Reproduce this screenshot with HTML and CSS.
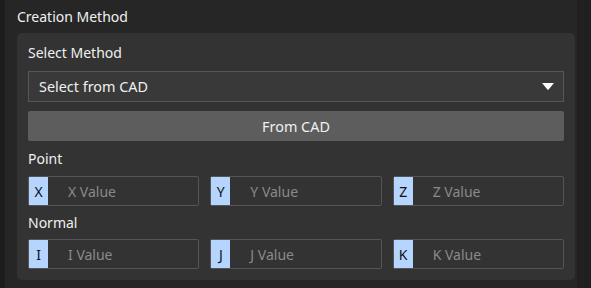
FILE: index.html
```html
<!DOCTYPE html>
<html>
<head>
<meta charset="utf-8">
<link rel="stylesheet" href="styles.css">
</head>
<body>
<div class="frame">
  <div class="edge-left"></div>
  <main class="main">
    <div class="title">Creation Method</div>
    <section class="card">
      <div class="label label-first">Select Method</div>
      <div class="select">
        <span class="select-text">Select from CAD</span>
        <svg class="caret" width="12" height="7" viewBox="0 0 12 7"><path d="M0 0 H12 L6.6 6.4 Q6 7 5.4 6.4 Z" fill="#ffffff"/></svg>
      </div>
      <div class="button">From CAD</div>
      <div class="label label-gap">Point</div>
      <div class="row">
        <div class="field"><span class="tag">X</span><span class="ph">X Value</span></div>
        <div class="field"><span class="tag">Y</span><span class="ph">Y Value</span></div>
        <div class="field"><span class="tag">Z</span><span class="ph">Z Value</span></div>
      </div>
      <div class="label label-gap2">Normal</div>
      <div class="row">
        <div class="field"><span class="tag">I</span><span class="ph">I Value</span></div>
        <div class="field"><span class="tag">J</span><span class="ph">J Value</span></div>
        <div class="field"><span class="tag">K</span><span class="ph">K Value</span></div>
      </div>
    </section>
  </main>
  <div class="edge-right"></div>
</div>
</body>
</html>
```

FILE: styles.css
```css
* { box-sizing: border-box; }
html, body {
  margin: 0;
  padding: 0;
  background: #262626;
  font-family: "Noto Sans", "Open Sans", sans-serif;
  color: #f0f0f0;
}
.frame {
  display: flex;
  width: 591px;
  height: 288px;
}
.edge-left {
  width: 5px;
  background: #1d1d1d;
}
.edge-right {
  width: 14px;
  background: #202020;
}
.main {
  flex: 1;
  padding: 0 2px 0 12px;
}
.title {
  height: 33px;
  line-height: 33px;
  font-size: 14px;
  white-space: nowrap;
}
.card {
  background: #333333;
  border-radius: 5px;
  padding: 11px;
  height: 247px;
}
.label {
  font-size: 14px;
  line-height: 17px;
  height: 17px;
  white-space: nowrap;
}
.label-first { margin-bottom: 10px; }
.label-gap { margin: 9px 0 9px; }
.label-gap2 { margin: 8px 0 8px; }
.select {
  height: 31px;
  border: 1px solid #575757;
  background: #393939;
  display: flex;
  align-items: center;
  justify-content: space-between;
  padding: 0 9px 0 10px;
  font-size: 14.4px;
}
.caret { display: block; }
.button {
  margin-top: 9px;
  height: 30px;
  background: #5d5d5d;
  border-radius: 2px;
  display: flex;
  align-items: center;
  justify-content: center;
  font-size: 14.4px;
}
.row {
  display: grid;
  grid-template-columns: 1fr 1fr 1fr;
  gap: 11px;
}
.field {
  height: 30px;
  border: 1px solid #555555;
  border-radius: 2px;
  display: flex;
  align-items: stretch;
  font-size: 14px;
}
.tag {
  width: 19px;
  background: #b5d5ff;
  color: #111111;
  display: flex;
  align-items: center;
  justify-content: center;
}
.ph {
  display: flex;
  align-items: center;
  padding-left: 20px;
  color: #8a8a8a;
}
```
